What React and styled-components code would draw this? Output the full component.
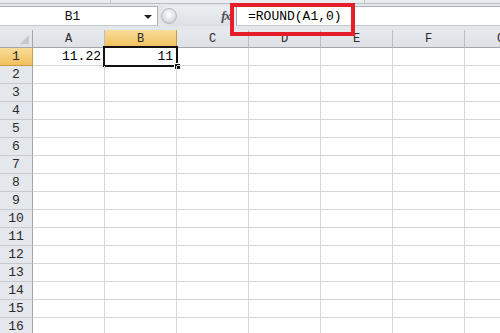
import React from "react";
import styled, { createGlobalStyle, css } from "styled-components";

const Global = createGlobalStyle`
  html, body { margin: 0; padding: 0; background: #ffffff; overflow: hidden; }
  body { font-family: "Liberation Mono", "DejaVu Sans Mono", monospace; }
`;

const Page = styled.div`
  position: relative;
  width: 500px;
  height: 333px;
  overflow: hidden;
  background: #ffffff;
`;

const RibbonEdge = styled.div`
  height: 3px;
  background: #e9ecf0;
  border-bottom: 1px solid #b9bec5;
  display: flex;
`;

const RibbonSep = styled.div`
  width: ${(p) => p.$w}px;
  flex: none;
  border-right: 1px solid #c3c7cd;
  box-sizing: border-box;
`;

const FormulaBar = styled.div`
  height: 26px;
  box-sizing: border-box;
  padding: 2px 0 4px;
  display: flex;
  align-items: stretch;
  background: #e3e7ec;
`;

const NameBox = styled.div`
  width: 158px;
  flex: none;
  box-sizing: border-box;
  background: #ffffff;
  border-top: 1px solid #a9b0b8;
  border-bottom: 1px solid #c2c7ce;
  border-right: 1px solid #a9b0b8;
  display: flex;
  align-items: center;
  font-size: 13px;
  color: #111;
`;

const NameText = styled.span`
  flex: 1;
  text-align: center;
  padding-left: 1px;
`;

const DropArrow = styled.span`
  width: 0;
  height: 0;
  border-left: 4px solid transparent;
  border-right: 4px solid transparent;
  border-top: 4px solid #222;
  margin-right: 5px;
  margin-top: 1px;
`;

const Splitter = styled.div`
  width: 72px;
  flex: none;
  margin-left: 2px;
  box-sizing: border-box;
  background: linear-gradient(#eceff2, #dce0e5);
  border-radius: 10px 0 0 10px;
  display: flex;
  align-items: center;
`;

const Knob = styled.div`
  width: 16px;
  height: 16px;
  border-radius: 50%;
  margin-left: 1px;
  box-sizing: border-box;
  border: 1px solid #b4bac2;
  background: radial-gradient(circle at 50% 40%, #ffffff 0%, #e4e7eb 45%, #bfc5cc 100%);
`;

const Fx = styled.span`
  margin-left: auto;
  margin-right: 2px;
  font-family: "Liberation Serif", "DejaVu Serif", serif;
  font-style: italic;
  font-weight: bold;
  font-size: 13px;
  color: #4a4f55;
  letter-spacing: -1px;
`;

const FormulaInput = styled.div`
  flex: 1;
  margin-left: 4px;
  box-sizing: border-box;
  background: #ffffff;
  border-top: 1px solid #a9b0b8;
  border-bottom: 1px solid #c2c7ce;
  border-left: 1px solid #a9b0b8;
  padding-left: 11px;
  display: flex;
  align-items: center;
  font-size: 13px;
  color: #000;
`;

const Highlight = styled.div`
  position: absolute;
  left: 230px;
  top: 3px;
  width: 125px;
  height: 33px;
  box-sizing: border-box;
  border: 4px solid #e61e2a;
  pointer-events: none;
`;

const Sheet = styled.div`
  display: grid;
  grid-template-columns: 33px repeat(7, 72px);
  grid-auto-rows: 18px;
`;

const selectedHeader = css`
  background: linear-gradient(#f9dc9a, #f1c15d);
  border-color: #c89a46;
`;

const ColHead = styled.div`
  box-sizing: border-box;
  background: linear-gradient(#e6e9ed, #dde1e6);
  border-right: 1px solid #b9bec5;
  border-bottom: 1px solid #9fa6ae;
  display: flex;
  align-items: center;
  justify-content: center;
  font-size: 12px;
  color: #2a2a2a;
  ${(p) => p.$sel && selectedHeader}
`;

const Corner = styled(ColHead)`
  position: relative;
  border-right: 1px solid #9fa6ae;
  &::after {
    content: "";
    position: absolute;
    right: 3px;
    bottom: 3px;
    width: 0;
    height: 0;
    border-left: 9px solid transparent;
    border-bottom: 9px solid #c4c9cf;
  }
`;

const RowHead = styled.div`
  box-sizing: border-box;
  background: #e4e8ed;
  border-right: 1px solid #9fa6ae;
  border-bottom: 1px solid #c6cbd1;
  display: flex;
  align-items: center;
  justify-content: center;
  font-size: 13px;
  color: #2a2a2a;
  ${(p) => p.$sel && selectedHeader}
`;

const Cell = styled.div`
  position: relative;
  box-sizing: border-box;
  border-right: 1px solid #d6d6d6;
  border-bottom: 1px solid #d6d6d6;
  display: flex;
  align-items: center;
  justify-content: flex-end;
  padding-right: 3px;
  font-size: 13px;
  color: #000;
`;

const CellText = styled.span`
  position: relative;
  z-index: 1;
`;

const Selection = styled.div`
  position: absolute;
  left: -2px;
  top: -2px;
  right: -2px;
  bottom: -2px;
  border: 2px solid #111;
  &::after {
    content: "";
    position: absolute;
    right: -4px;
    bottom: -4px;
    width: 5px;
    height: 5px;
    background: #111;
    border-left: 1px solid #fff;
    border-top: 1px solid #fff;
  }
`;

const columns = ["A", "B", "C", "D", "E", "F", "G"];
const values = { "A1": "11.22", "B1": "11" };

export default function App() {
  const rows = Array.from({ length: 16 }, (_, i) => i + 1);
  return (
    <Page>
      <Global />
      <RibbonEdge>
        <RibbonSep $w={111} />
        <RibbonSep $w={254} />
      </RibbonEdge>
      <FormulaBar>
        <NameBox>
          <NameText>B1</NameText>
          <DropArrow />
        </NameBox>
        <Splitter>
          <Knob />
          <Fx>fx</Fx>
        </Splitter>
        <FormulaInput>=ROUND(A1,0)</FormulaInput>
      </FormulaBar>
      <Sheet>
        <Corner />
        {columns.map((c) => (
          <ColHead key={c} $sel={c === "B"}>{c}</ColHead>
        ))}
        {rows.map((r) => (
          <React.Fragment key={r}>
            <RowHead $sel={r === 1}>{r}</RowHead>
            {columns.map((c) => {
              const id = c + r;
              return (
                <Cell key={id}>
                  {id === "B1" && <Selection />}
                  {values[id] && <CellText>{values[id]}</CellText>}
                </Cell>
              );
            })}
          </React.Fragment>
        ))}
      </Sheet>
      <Highlight />
    </Page>
  );
}
